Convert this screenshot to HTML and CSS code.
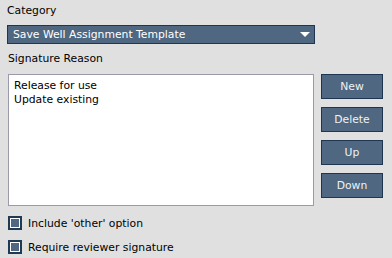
FILE: index.html
```html
<!DOCTYPE html>
<html>
<head>
  <title>Signature Settings</title>
  <link rel="stylesheet" href="styles.css">
</head>
<body>
  <div class="panel">
    <div class="field-label">Category</div>
    <div class="dropdown">
      <span>Save Well Assignment Template</span>
      <span class="arrow"></span>
    </div>

    <div class="field-label second">Signature Reason</div>
    <div class="reason-row">
      <div class="listbox">
        <div class="item">Release for use</div>
        <div class="item">Update existing</div>
      </div>
      <div class="buttons">
        <button>New</button>
        <button>Delete</button>
        <button>Up</button>
        <button>Down</button>
      </div>
    </div>

    <label class="check"><span class="box"></span>Include 'other' option</label>
    <label class="check"><span class="box"></span>Require reviewer signature</label>
  </div>
</body>
</html>
```

FILE: styles.css
```css
body {
  margin: 0;
  background-color: #e0e0e0;
  font-family: "DejaVu Sans", sans-serif;
  font-size: 10.8px;
  color: #000;
}

.panel {
  padding: 4px 7px 0 7px;
}

.field-label {
  height: 14px;
  line-height: 14px;
}

.field-label.second {
  margin-top: 8px;
  padding-left: 1px;
}

.dropdown {
  margin-top: 7px;
  width: 308px;
  height: 19px;
  box-sizing: border-box;
  border: 1px solid #1f3550;
  background-color: #4f6780;
  color: #fff;
  display: flex;
  align-items: center;
  justify-content: space-between;
  padding: 0 4px 0 5px;
  line-height: 17px;
}

.arrow {
  width: 0;
  height: 0;
  border-left: 5px solid transparent;
  border-right: 5px solid transparent;
  border-top: 5px solid #fff;
}

.reason-row {
  margin-top: 8px;
  display: flex;
  gap: 7px;
  padding-left: 1px;
}

.listbox {
  width: 306px;
  height: 132px;
  box-sizing: border-box;
  border: 1px solid #9a9aa8;
  background-color: #fff;
  padding: 4px 5px;
}

.item {
  line-height: 14px;
}

.buttons {
  display: flex;
  flex-direction: column;
  gap: 8px;
}

button {
  width: 62px;
  height: 25px;
  border: 1px solid #1f3550;
  background-color: #4f6780;
  color: #eef2f6;
  font-family: "DejaVu Sans", sans-serif;
  font-size: 10.8px;
  padding: 0;
}

.check {
  display: flex;
  align-items: center;
  gap: 6px;
  height: 14px;
  margin-top: 10px;
  padding-left: 1px;
}

.box {
  width: 14px;
  height: 14px;
  box-sizing: border-box;
  border: 2px solid #203a55;
  padding: 1px;
  background: linear-gradient(#4f6780, #4f6780) content-box, #fff;
}
```
